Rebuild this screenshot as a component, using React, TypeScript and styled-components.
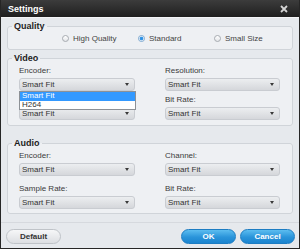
import React from 'react'
import styled, { createGlobalStyle } from "styled-components";

const GlobalStyle = createGlobalStyle`
    html, body {
        margin: 0;
        padding: 0;
        width: 300px;
        height: 249px;
        overflow: hidden;
        background: #1e1e1e;
        font-family: "Liberation Sans", Arial, sans-serif;
    }
`;

const Window = styled.div`
    width: 300px;
    height: 249px;
    box-sizing: border-box;
    border: 1px solid #262626;
    border-top: none;
    background: #e6e9ed;
    display: flex;
    flex-direction: column;
`;

const TitleBar = styled.div`
    height: 17px;
    flex: none;
    display: flex;
    align-items: center;
    justify-content: space-between;
    padding: 0 11px 0 7px;
    background: linear-gradient(#3c3c3c, #1f1f1f);
    border-bottom: 1px solid #f4f5f7;
    color: #fff;
    font-size: 9px;
    font-weight: bold;
`;

const Content = styled.div`
    padding: 0 6px;
`;

const Group = styled.fieldset<{ top: number }>`
    margin: ${(props) => props.top}px 0 0 0;
    padding: 0;
    min-width: 0;
    border: 1px solid #d0d4d9;
    border-radius: 3px;
    background: #eef0f3;
`;

const Legend = styled.legend`
    margin-left: 4px;
    padding: 0 2px;
    line-height: 10px;
    font-size: 9px;
    font-weight: bold;
    color: #1d1d1d;
`;

const RadioRow = styled.div`
    display: flex;
    padding: 2px 0 5px 54px;
`;

const RadioItem = styled.label`
    width: 76px;
    height: 11px;
    display: flex;
    align-items: center;
    gap: 4px;
    font-size: 8px;
    color: #444;
`;

const RadioDot = styled.span<{ checked?: boolean }>`
    width: 7px;
    height: 7px;
    box-sizing: border-box;
    border-radius: 50%;
    border: 1px solid ${(props) => props.checked ? "#7fa9cf" : "#a7abb1"};
    background: ${(props) => props.checked
        ? "radial-gradient(circle, #2d8fe3 0, #3d9be8 1.6px, #f4f8fc 2.2px)"
        : "linear-gradient(#ffffff, #e3e5e8)"};
`;

const Columns = styled.div<{ gap: number; pt: number; pb: number }>`
    display: grid;
    grid-template-columns: 116px 115px;
    column-gap: 30px;
    row-gap: ${(props) => props.gap}px;
    padding: ${(props) => props.pt}px 12px ${(props) => props.pb}px 11px;
`;

const Field = styled.div`
    position: relative;
    display: flex;
    flex-direction: column;
`;

const Label = styled.div`
    height: 10px;
    line-height: 10px;
    margin-bottom: 2px;
    font-size: 8px;
    color: #3a3a3a;
`;

const Select = styled.div`
    height: 13px;
    box-sizing: border-box;
    display: flex;
    align-items: center;
    justify-content: space-between;
    padding: 0 5px 0 2px;
    border: 1px solid #c9ccd1;
    border-radius: 3px;
    background: linear-gradient(#eceef0, #d5d7db);
    font-size: 8px;
    color: #333;
`;

const Arrow = styled.span`
    width: 0;
    height: 0;
    border-left: 2.5px solid transparent;
    border-right: 2.5px solid transparent;
    border-top: 3px solid #3a3a3a;
`;

const DropList = styled.div`
    position: absolute;
    left: 0;
    top: 25px;
    width: 117px;
    box-sizing: border-box;
    border: 1px solid #8d9196;
    background: #fff;
    z-index: 2;
`;

const DropItem = styled.div<{ active?: boolean }>`
    height: 8.5px;
    line-height: 8.5px;
    padding-left: 2px;
    font-size: 8px;
    color: ${(props) => props.active ? "#fff" : "#333"};
    background: ${(props) => props.active ? "#3399ff" : "transparent"};
`;

const Footer = styled.div`
    margin-top: 8px;
    border-top: 1px solid #d6d9de;
    display: flex;
    align-items: center;
    padding: 6px 4px 0 5px;
`;

const Button = styled.button<{ primary?: boolean }>`
    width: 55px;
    height: 15px;
    padding: 0;
    border-radius: 8px;
    font-family: "Liberation Sans", Arial, sans-serif;
    font-size: 8px;
    font-weight: bold;
    color: ${(props) => props.primary ? "#fff" : "#333"};
    border: 1px solid ${(props) => props.primary ? "#1c7cc2" : "#bfc3c8"};
    background: ${(props) => props.primary
        ? "linear-gradient(#5cbdf0, #2a94da 55%, #1b84cf)"
        : "linear-gradient(#f6f7f8, #dcdee2)"};
`;

const Spacer = styled.div`
    flex: 1;
`;

const ButtonGap = styled.div`
    width: 4px;
`;

const CloseIcon = () => (
    <svg width="8" height="8" viewBox="0 0 8 8">
        <path d="M1 1 L7 7 M7 1 L1 7" stroke="#d4d4d4" strokeWidth="1.8" />
    </svg>
);

interface DropdownProps {
    label?: string;
    value: string;
    open?: boolean;
}

// the label of the field under the open list is hidden by it, so it is left empty
const Dropdown = (props: DropdownProps) => {
    return <Field>
        <Label>{props.label}</Label>
        <Select>
            {props.value}
            <Arrow />
        </Select>
        {props.open && <DropList>
            <DropItem active>Smart Fit</DropItem>
            <DropItem>H264</DropItem>
        </DropList>}
    </Field>
}

export default function App() {
    return (
        <>
            <GlobalStyle />
            <Window>
                <TitleBar>
                    Settings
                    <CloseIcon />
                </TitleBar>
                <Content>
                    <Group top={3}>
                        <Legend>Quality</Legend>
                        <RadioRow>
                            <RadioItem><RadioDot />High Quality</RadioItem>
                            <RadioItem><RadioDot checked />Standard</RadioItem>
                            <RadioItem><RadioDot />Small Size</RadioItem>
                        </RadioRow>
                    </Group>
                    <Group top={3}>
                        <Legend>Video</Legend>
                        <Columns gap={4} pt={3} pb={5}>
                            <Dropdown label="Encoder:" value="Smart Fit" open />
                            <Dropdown label="Resolution:" value="Smart Fit" />
                            <Dropdown value="Smart Fit" />
                            <Dropdown label="Bit Rate:" value="Smart Fit" />
                        </Columns>
                    </Group>
                    <Group top={12}>
                        <Legend>Audio</Legend>
                        <Columns gap={8} pt={3} pb={4}>
                            <Dropdown label="Encoder:" value="Smart Fit" />
                            <Dropdown label="Channel:" value="Smart Fit" />
                            <Dropdown label="Sample Rate:" value="Smart Fit" />
                            <Dropdown label="Bit Rate:" value="Smart Fit" />
                        </Columns>
                    </Group>
                </Content>
                <Footer>
                    <Button>Default</Button>
                    <Spacer />
                    <Button primary>OK</Button>
                    <ButtonGap />
                    <Button primary>Cancel</Button>
                </Footer>
            </Window>
        </>
    )
}
